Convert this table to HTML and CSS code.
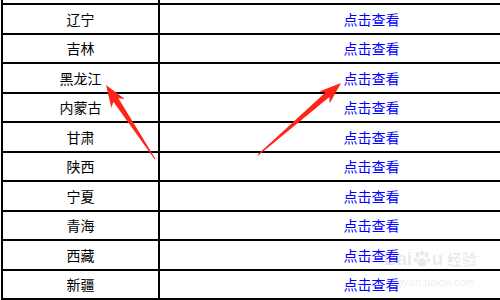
FILE: index.html
```html
<!DOCTYPE html>
<html lang="zh-CN">
<head>
<meta charset="utf-8">
<title>省份</title>
<link rel="stylesheet" href="styles.css">
</head>
<body>
<div class="page">
  <div class="table">
    <div class="row partial"><div class="cell name"></div><div class="cell link"></div></div>
    <div class="row"><div class="cell name">辽宁</div><div class="cell link"><a href="#">点击查看</a></div></div>
    <div class="row"><div class="cell name">吉林</div><div class="cell link"><a href="#">点击查看</a></div></div>
    <div class="row"><div class="cell name">黑龙江</div><div class="cell link"><a href="#">点击查看</a></div></div>
    <div class="row"><div class="cell name">内蒙古</div><div class="cell link"><a href="#">点击查看</a></div></div>
    <div class="row"><div class="cell name">甘肃</div><div class="cell link"><a href="#">点击查看</a></div></div>
    <div class="row"><div class="cell name">陕西</div><div class="cell link"><a href="#">点击查看</a></div></div>
    <div class="row"><div class="cell name">宁夏</div><div class="cell link"><a href="#">点击查看</a></div></div>
    <div class="row"><div class="cell name">青海</div><div class="cell link"><a href="#">点击查看</a></div></div>
    <div class="row"><div class="cell name">西藏</div><div class="cell link"><a href="#">点击查看</a></div></div>
    <div class="row"><div class="cell name">新疆</div><div class="cell link"><a href="#">点击查看</a></div></div>
  </div>
  <svg class="arrows" width="500" height="300" viewBox="0 0 500 300">
    <polygon points="106,85 124.8,98.9 118.4,98.3 155.4,158.7 154.6,159.3 113.4,101.7 111.4,107.7"/>
    <polygon points="341,83 329.6,103.4 329.4,97.1 258.3,155.4 257.7,154.6 325.4,92.5 319.2,91.4"/>
  </svg>
  <div class="watermark">
    <div class="wm-logo">
      <span>Bai</span>
      <svg class="paw" width="18" height="18" viewBox="0 0 20 20">
        <ellipse cx="5" cy="5" rx="2.2" ry="3"/>
        <ellipse cx="10" cy="3.5" rx="2.2" ry="3"/>
        <ellipse cx="15" cy="5" rx="2.2" ry="3"/>
        <ellipse cx="3" cy="11" rx="2" ry="2.5"/>
        <ellipse cx="17" cy="11" rx="2" ry="2.5"/>
        <path d="M10 9 C6 9 4 15 6 17 C8 19 12 19 14 17 C16 15 14 9 10 9 Z"/>
      </svg>
      <span>u</span>
      <span class="wm-cn">经验</span>
    </div>
    <div class="wm-url">jingyan.baidu.com</div>
  </div>
</div>
</body>
</html>
```

FILE: styles.css
```css
html, body {
  margin: 0;
  padding: 0;
  background: #fff;
  overflow: hidden;
}

.page {
  position: relative;
  width: 500px;
  height: 300px;
  overflow: hidden;
  font-family: "Noto Sans CJK SC", "Noto Sans", sans-serif;
  font-size: 14px;
}

.table {
  display: flex;
  flex-direction: column;
  margin-left: 1px;
  width: 584px;
  border-left: 2px solid #000;
}

.row {
  display: grid;
  grid-template-columns: 157px 423px;
  box-sizing: border-box;
  height: 29.5px;
  border-bottom: 2px solid #000;
}

.row.partial {
  height: 5px;
}

.cell {
  display: flex;
  align-items: center;
  justify-content: center;
  color: #000;
  line-height: 1;
}

.cell.name {
  border-right: 2px solid #000;
}

.cell.link a {
  color: #0000ff;
  text-decoration: none;
}

.arrows {
  position: absolute;
  left: 0;
  top: 0;
}

.arrows polygon {
  fill: #ff2419;
}

.watermark {
  position: absolute;
  left: 384px;
  top: 247px;
  width: 110px;
  display: flex;
  flex-direction: column;
  color: rgba(0, 0, 0, 0.09);
  font-family: "Liberation Sans", "Noto Sans CJK SC", sans-serif;
  white-space: nowrap;
  pointer-events: none;
}

.wm-logo {
  display: flex;
  align-items: center;
  gap: 1px;
  font-size: 18px;
  font-weight: bold;
  line-height: 24px;
}

.wm-cn {
  font-family: "Noto Sans CJK SC", sans-serif;
  font-size: 15px;
  margin-left: 3px;
}

.paw {
  fill: rgba(0, 0, 0, 0.09);
}

.wm-url {
  font-size: 11px;
  line-height: 12px;
  margin-left: 2px;
  margin-top: 5px;
}
```
